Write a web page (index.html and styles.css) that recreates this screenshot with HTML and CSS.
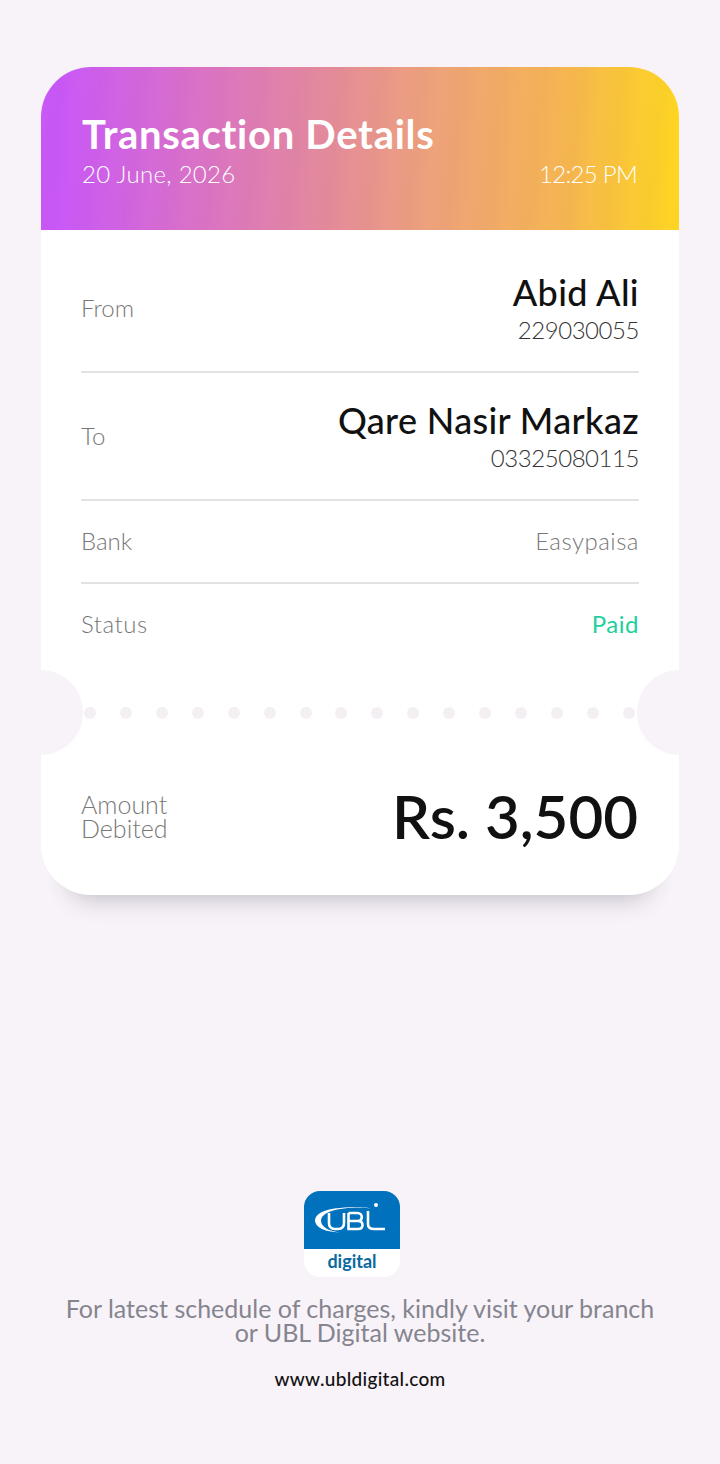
FILE: index.html
```html
<!DOCTYPE html>
<html lang="en">
<head>
  <meta charset="UTF-8">
  <title>Transaction Details</title>
  <meta name="viewport" content="width=device-width, initial-scale=1.0">
  <link rel="stylesheet" href="styles.css">
</head>
<body>
  <div class="receipt">
    <div class="receipt-head">
      <h1>Transaction Details</h1>
      <div class="head-meta">
        <span>20 June, 2026</span>
        <span class="head-time">12:25 PM</span>
      </div>
    </div>

    <div class="receipt-body">
      <div class="row row-tall">
        <span class="label">From</span>
        <div class="party">
          <div class="party-name">Abid Ali</div>
          <div class="party-num">229030055</div>
        </div>
      </div>
      <div class="row row-tall">
        <span class="label">To</span>
        <div class="party">
          <div class="party-name">Qare Nasir Markaz</div>
          <div class="party-num">03325080115</div>
        </div>
      </div>
      <div class="row">
        <span class="label">Bank</span>
        <span class="label label-wide">Easypaisa</span>
      </div>
      <div class="row row-last">
        <span class="label label-wide">Status</span>
        <span class="paid">Paid</span>
      </div>
    </div>

    <div class="tear">
      <div class="notch notch-left"></div>
      <div class="dots">
        <i></i><i></i><i></i><i></i><i></i><i></i><i></i><i></i>
        <i></i><i></i><i></i><i></i><i></i><i></i><i></i><i></i>
      </div>
      <div class="notch notch-right"></div>
    </div>

    <div class="amount">
      <span class="amount-label">Amount<br>Debited</span>
      <span class="amount-value">Rs. 3,500</span>
    </div>
  </div>

  <div class="footer">
    <div class="logo">
      <div class="logo-top">
        <svg width="96" height="58" viewBox="0 0 96 58">
          <path d="M36 17C20 18 11 23 11 29.500C11 36 20 41 36 41.500C24 40 17 35.500 17 29.500C17 24 25 19 40 17.500C52 16 63 16.500 68 18C62 15.500 50 15.500 36 17Z" fill="#fff"/>
          <path d="M25 22V32C25 36.500 27 38 31 38H34C38 38 40 36.500 40 32V22" fill="none" stroke="#fff" stroke-width="2.600"/>
          <path d="M44.500 22V38H54C57 38 58.500 36.300 58.500 34C58.500 31.800 57 30 54 30H44.500M54 30C56.500 30 57.800 28.500 57.800 26.300C57.800 23.800 56 22 53.500 22H44.500" fill="none" stroke="#fff" stroke-width="2.600"/>
          <path d="M64 20V33C64 36.500 66 38 70 38H81" fill="none" stroke="#fff" stroke-width="2.600"/>
          <circle cx="72" cy="14" r="2" fill="#fff"/>
        </svg>
      </div>
      <div class="logo-bottom">digital</div>
    </div>
    <p class="note">For latest schedule of charges, kindly visit your branch<br>or UBL Digital website.</p>
    <div class="site">www.ubldigital.com</div>
  </div>
</body>
</html>
```

FILE: styles.css
```css
:root {
  --bg: #f8f3f8;
  --grey: #787878;
  --ink: #111111;
  --line: #e2e2e2;
  --green: #1fd09c;
}

body {
  margin: 0;
  height: 1464px;
  overflow: hidden;
  background: var(--bg);
  font-family: Lato, sans-serif;
  color: var(--ink);
}

.receipt {
  margin: 67px 41px 0;
  width: 638px;
  height: 828px;
  background: #fff;
  border-radius: 50px;
  box-shadow: 0 30px 24px -30px rgba(60, 60, 80, 0.32), 0 36px 24px -24px rgba(120, 110, 130, 0.05);
  display: flex;
  flex-direction: column;
}

.receipt-head {
  height: 163px;
  box-sizing: border-box;
  padding: 44px 42px 0 41px;
  border-radius: 50px 50px 0 0;
  background:
    repeating-linear-gradient(96deg, rgba(255, 255, 255, 0.012) 0, rgba(110, 90, 110, 0.022) 20px, rgba(255, 255, 255, 0.012) 40px),
    linear-gradient(90deg, #c957f7 3%, #da71c6 25%, #e48a9a 45%, #eda07c 60%, #f6b550 82%, #ffd61f 100%);
  color: #fff;
}

.receipt-head h1 {
  margin: 0;
  font-size: 40px;
  line-height: 46px;
  font-weight: 700;
  letter-spacing: 0.7px;
}

.head-meta {
  display: flex;
  justify-content: space-between;
  font-size: 24px;
  line-height: 30px;
  font-weight: 300;
  letter-spacing: 0.3px;
  margin-top: 2px;
}

.head-time {
  letter-spacing: -0.7px;
}

.receipt-body {
  padding: 0 40px;
}

.row {
  height: 83px;
  box-sizing: border-box;
  display: flex;
  justify-content: space-between;
  align-items: center;
  padding-bottom: 2px;
  border-bottom: 2px solid var(--line);
}

.row-tall {
  height: 128px;
}

.row:first-child {
  height: 143px;
  padding-top: 15px;
}

.row-last {
  border-bottom: 0;
  padding-bottom: 5px;
}

.label {
  font-size: 24px;
  font-weight: 300;
  color: var(--grey);
}

.label-wide {
  letter-spacing: 0.5px;
}

.party {
  text-align: right;
  margin-top: 2px;
}

.party-name {
  font-size: 36px;
  line-height: 42px;
  font-weight: 500;
  letter-spacing: 0.35px;
}

.party-num {
  font-size: 24px;
  line-height: 33px;
  font-weight: 300;
  color: #333;
  letter-spacing: -0.45px;
}

.paid {
  font-size: 24px;
  letter-spacing: 0.5px;
  color: var(--green);
}

.tear {
  position: relative;
  height: 88px;
  display: flex;
  align-items: center;
  top: 2px;
}

.dots {
  flex: 1;
  padding: 0 44px 0 43px;
  display: flex;
  justify-content: space-between;
}

.dots i {
  width: 12px;
  height: 12px;
  border-radius: 50%;
  background: #f3eff3;
}

.notch {
  position: absolute;
  top: 1px;
  width: 42px;
  height: 85px;
  background: var(--bg);
}

.notch-left {
  left: 0;
  border-radius: 0 42px 42px 0;
}

.notch-right {
  right: 0;
  border-radius: 42px 0 0 42px;
}

.amount {
  display: flex;
  justify-content: space-between;
  align-items: flex-start;
  padding: 26px 41px 0 40px;
}

.amount-label {
  font-size: 25px;
  line-height: 24px;
  font-weight: 300;
  color: var(--grey);
  margin-top: 11px;
}

.amount-value {
  font-size: 60px;
  line-height: 70px;
  font-weight: 600;
}

.footer {
  margin-top: 296px;
  display: flex;
  flex-direction: column;
  align-items: center;
}

.logo {
  width: 96px;
  height: 86px;
  margin-left: -16px;
  border-radius: 16px;
  overflow: hidden;
  background: #fff;
}

.logo-top {
  height: 58px;
  background: #0071bc;
  display: flex;
}

.logo-bottom {
  text-align: center;
  font-size: 18px;
  line-height: 24px;
  font-weight: 700;
  color: #0a6a9e;
}

.note {
  margin: 19px 0 0;
  text-align: center;
  font-size: 25px;
  line-height: 24px;
  color: #85858f;
}

.site {
  margin-top: 23px;
  font-size: 19px;
  line-height: 24px;
  font-weight: 500;
  letter-spacing: 0.3px;
  color: #111;
}
```
